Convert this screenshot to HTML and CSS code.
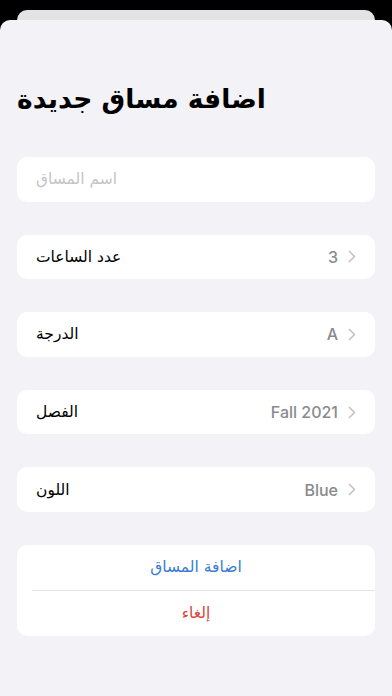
FILE: index.html
```html
<!DOCTYPE html>
<html lang="ar" dir="ltr">
<head>
<meta charset="utf-8">
<title>اضافة مساق جديدة</title>
<link rel="stylesheet" href="styles.css">
</head>
<body>
<div class="screen">
  <div class="back-sheet"></div>
  <div class="sheet">
    <div class="title-wrap"><h1 class="title">اضافة مساق جديدة</h1></div>
    <div class="list">
      <div class="card field"><span class="placeholder">اسم المساق</span></div>
      <div class="card row">
        <span class="label">عدد الساعات</span>
        <span class="spacer"></span>
        <span class="value">3</span>
        <svg class="chev" viewBox="0 0 8 13" width="8" height="13"><path d="M1.5 1.5 L6.5 6.5 L1.5 11.5" fill="none" stroke="#c4c4c7" stroke-width="1.7" stroke-linecap="round" stroke-linejoin="round"/></svg>
      </div>
      <div class="card row">
        <span class="label">الدرجة</span>
        <span class="spacer"></span>
        <span class="value">A</span>
        <svg class="chev" viewBox="0 0 8 13" width="8" height="13"><path d="M1.5 1.5 L6.5 6.5 L1.5 11.5" fill="none" stroke="#c4c4c7" stroke-width="1.7" stroke-linecap="round" stroke-linejoin="round"/></svg>
      </div>
      <div class="card row">
        <span class="label">الفصل</span>
        <span class="spacer"></span>
        <span class="value">Fall 2021</span>
        <svg class="chev" viewBox="0 0 8 13" width="8" height="13"><path d="M1.5 1.5 L6.5 6.5 L1.5 11.5" fill="none" stroke="#c4c4c7" stroke-width="1.7" stroke-linecap="round" stroke-linejoin="round"/></svg>
      </div>
      <div class="card row">
        <span class="label">اللون</span>
        <span class="spacer"></span>
        <span class="value">Blue</span>
        <svg class="chev" viewBox="0 0 8 13" width="8" height="13"><path d="M1.5 1.5 L6.5 6.5 L1.5 11.5" fill="none" stroke="#c4c4c7" stroke-width="1.7" stroke-linecap="round" stroke-linejoin="round"/></svg>
      </div>
      <div class="card actions">
        <div class="action add">اضافة المساق</div>
        <div class="divider"></div>
        <div class="action cancel">إلغاء</div>
      </div>
    </div>
  </div>
</div>
</body>
</html>
```
FILE: styles.css
```css
html, body {
  margin: 0;
  padding: 0;
  background: #000;
}
.screen {
  width: 392px;
  height: 696px;
  background: #000;
  display: flex;
  flex-direction: column;
  overflow: hidden;
  padding-top: 10px;
  box-sizing: border-box;
}
.back-sheet {
  height: 10px;
  margin: 0 17px;
  background: #e3e3e6;
  border-radius: 10px 10px 0 0;
  flex: none;
}
.sheet {
  flex: 1;
  background: #f2f2f7;
  border-radius: 10px 10px 0 0;
  padding: 0 17px;
  font-family: "DejaVu Sans", "Inter", sans-serif;
}
.title-wrap {
  padding-top: 57px;
  display: flex;
  justify-content: flex-start;
}
.title {
  margin: 0;
  height: 44px;
  line-height: 44px;
  font-size: 26.5px;
  font-weight: 700;
  color: #000;
}
.list {
  margin-top: 36px;
  display: flex;
  flex-direction: column;
  gap: 33px;
}
.card {
  background: #fff;
  border-radius: 10px;
}
.field, .row {
  height: 44.6px;
  display: flex;
  align-items: center;
  padding: 0 19px 0 19px;
}
.placeholder {
  font-size: 15.5px;
  color: #c4c4c7;
}
.label {
  font-size: 15.5px;
  color: #000;
}
.spacer {
  flex: 1;
}
.value {
  font-family: "Inter", "Roboto", sans-serif;
  font-size: 16px;
  font-weight: 500;
  color: #8a8a8e;
  margin-right: 10px;
}
.chev {
  display: block;
  flex: none;
}
.actions {
  display: flex;
  flex-direction: column;
  height: 91px;
}
.action {
  height: 45px;
  display: flex;
  align-items: center;
  justify-content: center;
  font-size: 15.5px;
}
.add { color: #3a7bd5; }
.cancel { color: #d9443a; }
.divider {
  height: 1px;
  background: #e3e3e6;
  margin-left: 15px;
}
```
